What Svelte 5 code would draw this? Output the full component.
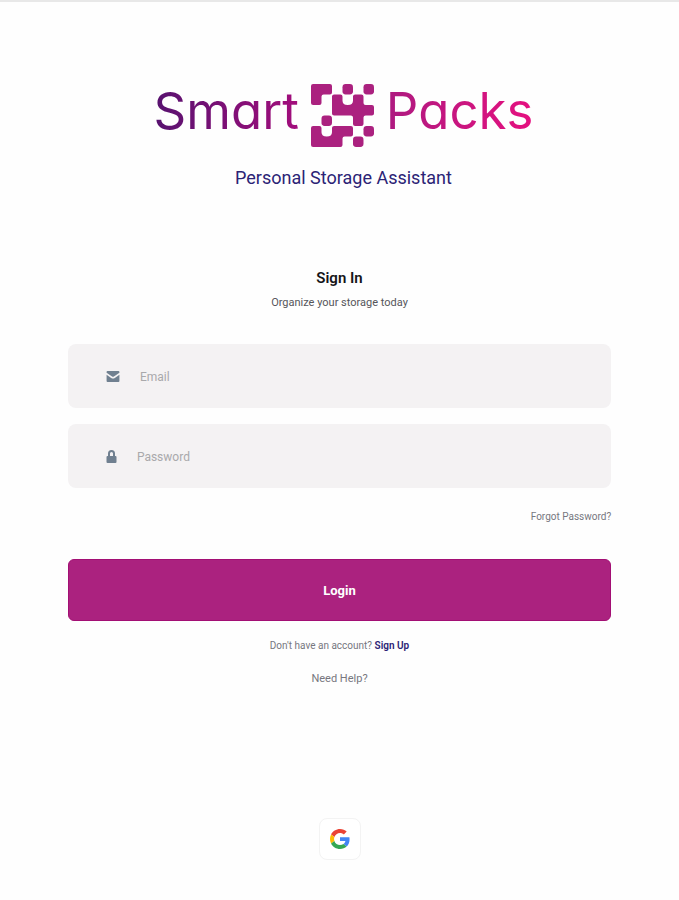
<script lang="ts">
  let email = "";
  let password = "";
</script>

<main class="page">
  <header class="brand">
    <h1 class="logo">
      <span class="word smart">Smart</span>
      <svg class="mark" viewBox="0 0 60 60" aria-hidden="true">
        <path
          d="M0 2q0-2 2-2H18q2 0 2 2V8q0 2-2 2H12q-2 0-2 2V18q0 2-2 2H2q-2 0-2-2Z"
        />
        <path
          d="M22 10H28q2 0 2 2V16q0 4 5 4q5 0 5-4V12q0-2 2-2H48q2 0 2 2V18q0 2 2 2H58q2 0 2 2V28q0 2-2 2H52q-2 0-2 2V38q0 2-2 2H42q-2 0-2-2V32q0-2-2-2H22q-2 0-2-2V12q0-2 2-2Z"
        />
        <path
          d="M2 40H8q2 0 2 2V46q0 4 5 4q5 0 5-4V42q0-2 2-2H38q2 0 2 2V48q0 2-2 2H32q-2 0-2 2V58q0 2-2 2H2q-2 0-2-2V42q0-2 2-2Z"
        />
        <rect x="30" y="0" width="10" height="10" rx="3" />
        <rect x="50" y="0" width="10" height="10" rx="3" />
        <rect x="10" y="30" width="10" height="10" rx="3" />
        <rect x="50" y="40" width="10" height="10" rx="3" />
        <rect x="40" y="50" width="10" height="10" rx="3" />
      </svg>
      <span class="word packs">Packs</span>
    </h1>
    <p class="tagline">Personal Storage Assistant</p>
  </header>

  <!-- Sign in form -->
  <form class="sign-in" on:submit|preventDefault>
    <h2>Sign In</h2>
    <p class="subtitle">Organize your storage today</p>

    <label class="field">
      <svg class="mail" viewBox="0 0 14 12" role="img" aria-label="Email">
        <path d="M1 0H13q1 0 1 1V2L8 6q-1 .8-2 0L0 2V1q0-1 1-1Z" />
        <path d="M0 4L5 7.500q2 1.500 4 0L14 4V11q0 1-1 1H1q-1 0-1-1Z" />
      </svg>
      <input type="email" placeholder="Email" bind:value={email} />
    </label>

    <label class="field">
      <svg class="lock" viewBox="0 0 10 13" role="img" aria-label="Password">
        <path d="M2.500 6V3.500a2.500 2.500 0 0 1 5 0V6" />
        <rect x="0" y="6" width="10" height="7" rx="1" />
      </svg>
      <input type="password" placeholder="Password" bind:value={password} />
    </label>

    <a class="forgot" href="#forgot">Forgot Password?</a>
    <button class="login" type="submit">Login</button>
  </form>

  <p class="note">Don't have an account? <a href="#signup">Sign Up</a></p>
  <a class="help" href="#help">Need Help?</a>

  <button class="google" type="button" aria-label="Sign in with Google">
    <svg viewBox="0 0 48 48" aria-hidden="true">
      <path
        fill="#ea4335"
        d="M24 9.500c3.540 0 6.710 1.220 9.210 3.600l6.850-6.850C35.900 2.380 30.470 0 24 0 14.620 0 6.510 5.380 2.560 13.220l7.980 6.190C12.430 13.720 17.740 9.500 24 9.500z"
      />
      <path
        fill="#4285f4"
        d="M46.980 24.550c0-1.570-.15-3.090-.38-4.550H24v9.020h12.940c-.58 2.960-2.260 5.480-4.780 7.180l7.730 6c4.510-4.180 7.090-10.360 7.090-17.650z"
      />
      <path
        fill="#fbbc05"
        d="M10.530 28.590c-.48-1.450-.76-2.990-.76-4.590s.27-3.140.76-4.590l-7.980-6.190C.92 16.460 0 20.120 0 24c0 3.880.92 7.540 2.560 10.780l7.970-6.190z"
      />
      <path
        fill="#34a853"
        d="M24 48c6.480 0 11.930-2.130 15.890-5.810l-7.730-6c-2.150 1.450-4.920 2.300-8.160 2.300-6.260 0-11.570-4.220-13.470-9.910l-7.980 6.190C6.510 42.620 14.620 48 24 48z"
      />
    </svg>
  </button>
</main>

<style>
  :global(body) {
    margin: 0;
    background: #fefefe;
  }

  .page {
    display: flex;
    flex-direction: column;
    align-items: center;
    box-sizing: border-box;
    min-height: 100vh;
    padding: 80px 10% 40px;
    border-top: 2px solid #e8e8e8;
    color: #77777f;
    font-family: Roboto, sans-serif;
    font-size: 10px;
    line-height: 16px;
  }

  h1,
  h2,
  p {
    margin: 0;
  }

  a {
    color: inherit;
    text-decoration: none;
  }

  /* Brand */
  .brand {
    padding-left: 8px;
    text-align: center;
  }

  .logo {
    display: flex;
    align-items: center;
    justify-content: center;
    gap: 12px;
    font-family: Inter, sans-serif;
    font-size: 51px;
    font-weight: 400;
    line-height: 58px;
    font-feature-settings: "cv11";
  }

  .word {
    padding-bottom: 8px;
    background-clip: text;
    -webkit-background-clip: text;
    color: transparent;
  }

  .smart {
    background-image: linear-gradient(90deg, #57126f, #a30d7c);
  }

  .packs {
    background-image: linear-gradient(90deg, #ad1a80, #e5107f);
  }

  .mark {
    width: 63px;
    height: 63px;
    fill: #ab217f;
  }

  .tagline {
    margin-top: 18px;
    color: #2b2375;
    font-size: 18px;
    line-height: 24px;
  }

  /* Form */
  .sign-in {
    display: flex;
    flex-direction: column;
    width: 100%;
    margin-top: 78px;
  }

  h2 {
    color: #151518;
    font-size: 15px;
    font-weight: 600;
    line-height: 20px;
    text-align: center;
  }

  .subtitle {
    margin: 7px 0 33px;
    color: #55555a;
    font-size: 11px;
    text-align: center;
  }

  .field {
    display: flex;
    align-items: center;
    gap: 20px;
    height: 64px;
    margin-bottom: 16px;
    padding: 0 38px;
    border-radius: 8px;
    background: #f4f2f3;
  }

  .field svg {
    flex: none;
    fill: #708090;
  }

  .mail {
    width: 14px;
    height: 11px;
  }

  .lock {
    width: 11px;
    height: 13px;
  }

  .lock path {
    fill: none;
    stroke: #708090;
    stroke-width: 2;
  }

  input {
    flex: 1;
    min-width: 0;
    padding: 2px 0 0;
    border: 0;
    outline: 0;
    background: none;
    color: #333;
    font-family: inherit;
    font-size: 12px;
  }

  input::placeholder {
    color: #a9a9ab;
    opacity: 1;
  }

  .forgot {
    align-self: flex-end;
    margin: 5px 0 34px;
    font-size: 10px;
  }

  .login {
    height: 62px;
    border: 1px solid #a30f74;
    border-radius: 6px;
    background: #ab227f;
    color: #fff;
    font-family: inherit;
    font-size: 13px;
    font-weight: 700;
    cursor: pointer;
  }

  .note {
    margin-top: 17px;
  }

  .note a {
    color: #2b2375;
    font-weight: 600;
  }

  .help {
    margin-top: 17px;
    font-size: 11px;
  }

  .google {
    display: flex;
    align-items: center;
    justify-content: center;
    width: 42px;
    height: 42px;
    margin-top: auto;
    padding: 0;
    border: 1px solid #f3f3f3;
    border-radius: 8px;
    background: #fff;
    cursor: pointer;
  }

  .google svg {
    width: 20px;
    height: 20px;
  }
</style>
